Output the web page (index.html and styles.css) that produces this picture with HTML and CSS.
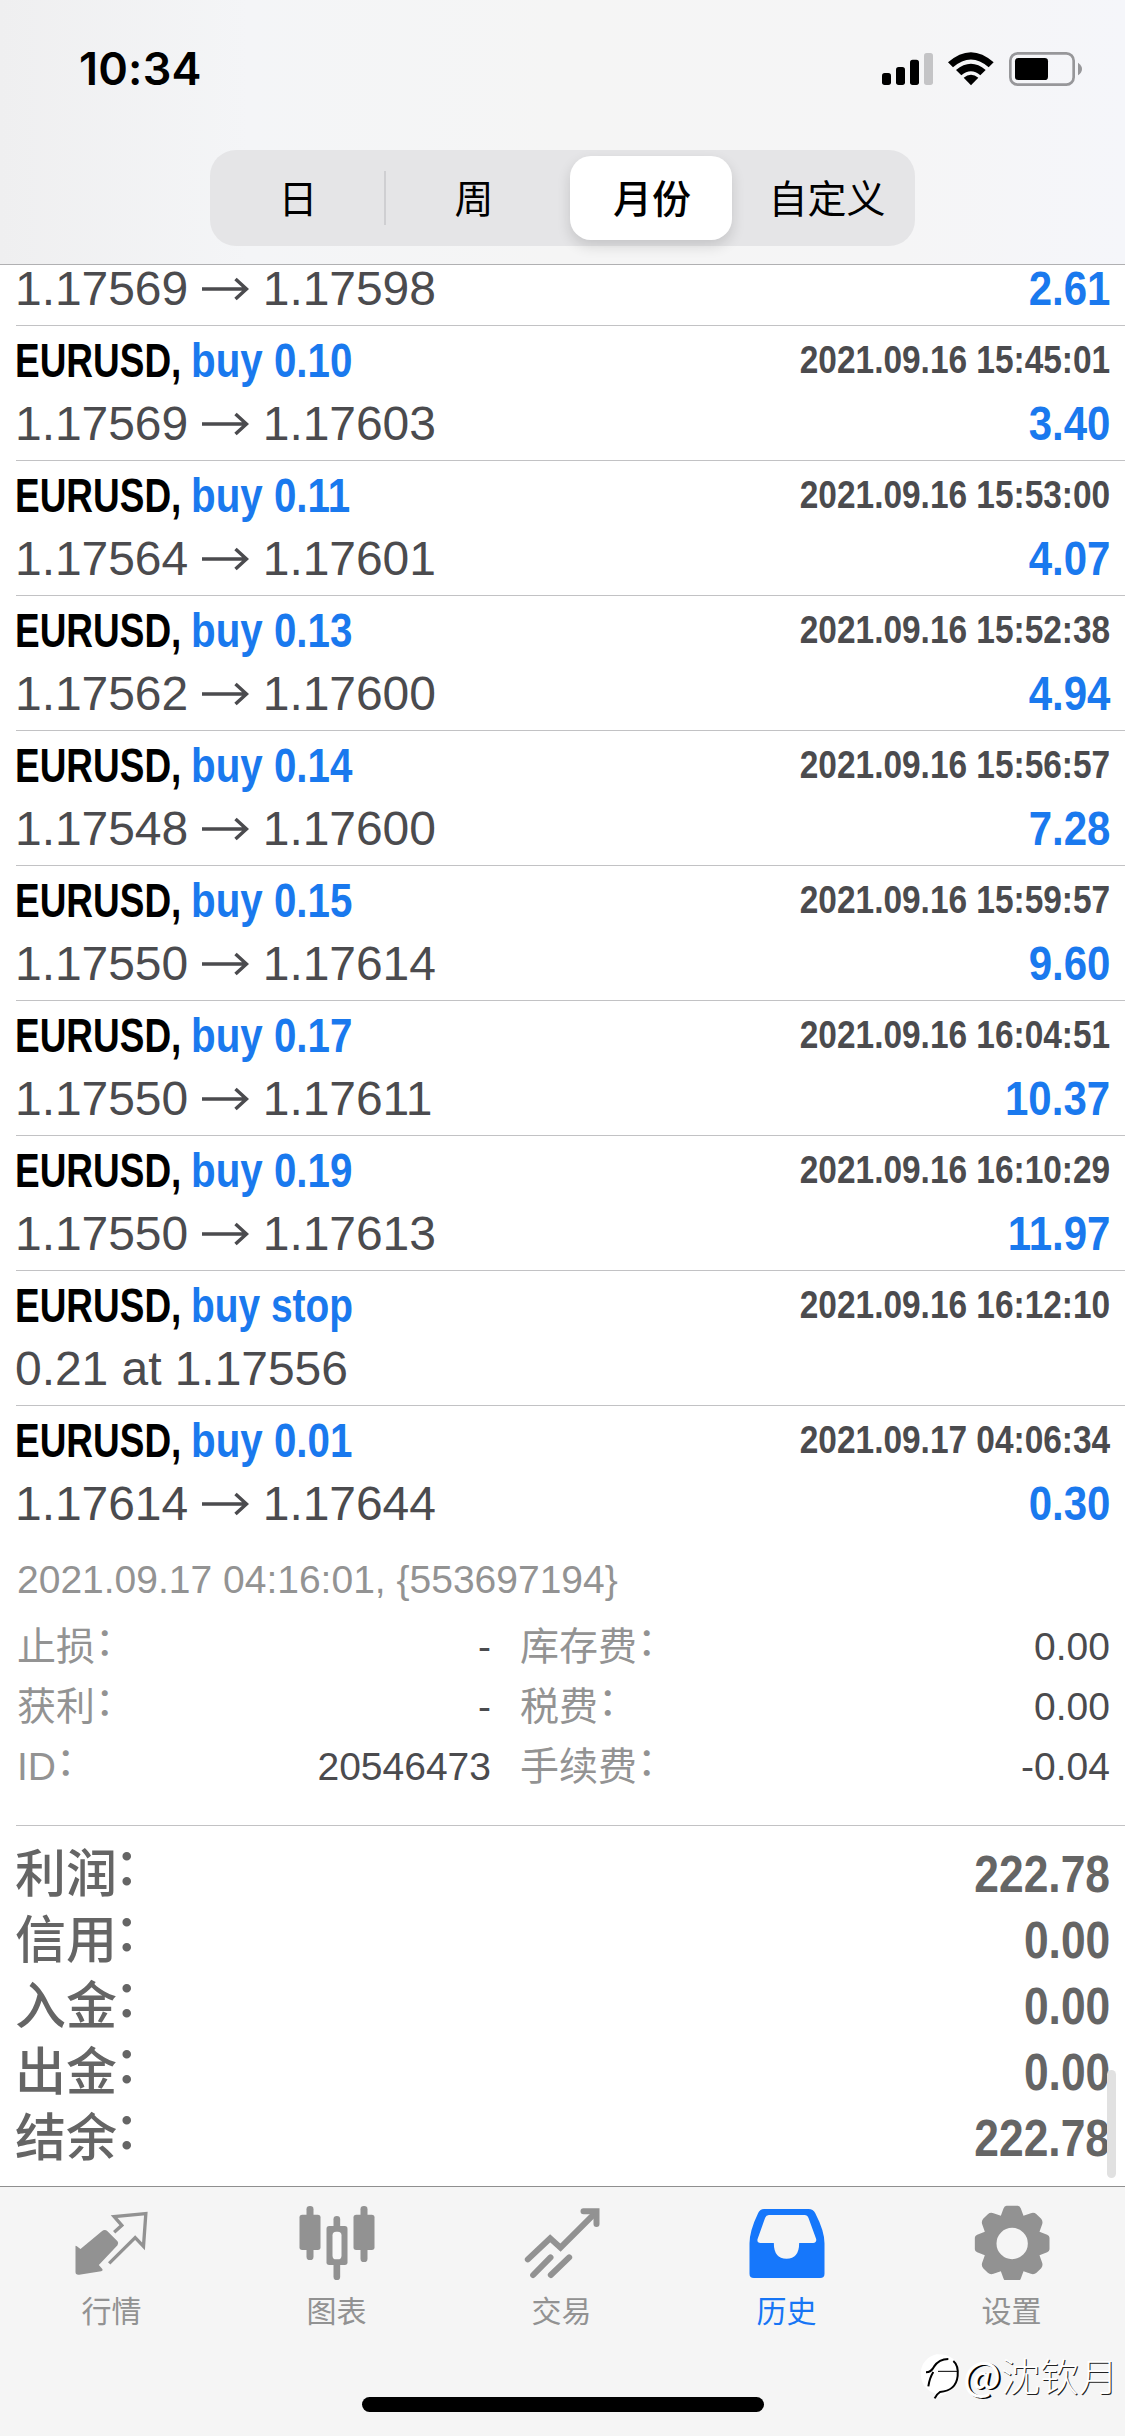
FILE: index.html
```html
<!DOCTYPE html>
<html lang="zh-CN">
<head>
<meta charset="utf-8">
<title>历史</title>
<link rel="stylesheet" href="styles.css">
</head>
<body>
<div class="screen">
  <header class="header">
    <div class="status">
      <span class="clock">10:34</span>
      <svg class="status-icons" viewBox="0 0 660 180">
        <rect x="36" y="99" width="27" height="36" rx="8"/>
        <rect x="78" y="81" width="27" height="54" rx="8"/>
        <rect x="120" y="59" width="27" height="76" rx="8"/>
        <rect x="162" y="39" width="27" height="96" rx="8" fill="#c4c4c6"/>
        <path d="M234 67Q303 6 371 67L356 82Q303 35 249 82Z"/>
        <path d="M258 90Q303 52 347 90L331 106Q303 82 274 106Z"/>
        <path d="M281 113Q303 95 325 113L303 136Z"/>
        <rect x="421" y="40" width="190" height="94" rx="22" fill="none" stroke="#97979a" stroke-width="8"/>
        <rect x="435" y="54" width="99" height="66" rx="10"/>
        <path d="M624 68Q636 76 636 87T624 106Z" fill="#97979a"/>
      </svg>
    </div>
    <nav class="segments">
      <span class="segment divided">日</span>
      <span class="segment">周</span>
      <span class="segment selected">月份</span>
      <span class="segment">自定义</span>
    </nav>
  </header>

  <main class="content">
    <section class="row row-cut">
      <div class="line"><span class="price">1.17569 <svg class="arrow" viewBox="0 0 48 24"><path d="M1 12H45M34.500 2L45.500 12L34.500 22"/></svg> 1.17598</span><b class="profit">2.61</b></div>
    </section>
    <section class="row">
      <div class="line"><span class="name"><b class="symbol">EURUSD,</b><b class="side">buy 0.10</b></span><b class="date">2021.09.16 15:45:01</b></div>
      <div class="line"><span class="price">1.17569 <svg class="arrow" viewBox="0 0 48 24"><path d="M1 12H45M34.500 2L45.500 12L34.500 22"/></svg> 1.17603</span><b class="profit">3.40</b></div>
    </section>
    <section class="row">
      <div class="line"><span class="name"><b class="symbol">EURUSD,</b><b class="side">buy 0.11</b></span><b class="date">2021.09.16 15:53:00</b></div>
      <div class="line"><span class="price">1.17564 <svg class="arrow" viewBox="0 0 48 24"><path d="M1 12H45M34.500 2L45.500 12L34.500 22"/></svg> 1.17601</span><b class="profit">4.07</b></div>
    </section>
    <section class="row">
      <div class="line"><span class="name"><b class="symbol">EURUSD,</b><b class="side">buy 0.13</b></span><b class="date">2021.09.16 15:52:38</b></div>
      <div class="line"><span class="price">1.17562 <svg class="arrow" viewBox="0 0 48 24"><path d="M1 12H45M34.500 2L45.500 12L34.500 22"/></svg> 1.17600</span><b class="profit">4.94</b></div>
    </section>
    <section class="row">
      <div class="line"><span class="name"><b class="symbol">EURUSD,</b><b class="side">buy 0.14</b></span><b class="date">2021.09.16 15:56:57</b></div>
      <div class="line"><span class="price">1.17548 <svg class="arrow" viewBox="0 0 48 24"><path d="M1 12H45M34.500 2L45.500 12L34.500 22"/></svg> 1.17600</span><b class="profit">7.28</b></div>
    </section>
    <section class="row">
      <div class="line"><span class="name"><b class="symbol">EURUSD,</b><b class="side">buy 0.15</b></span><b class="date">2021.09.16 15:59:57</b></div>
      <div class="line"><span class="price">1.17550 <svg class="arrow" viewBox="0 0 48 24"><path d="M1 12H45M34.500 2L45.500 12L34.500 22"/></svg> 1.17614</span><b class="profit">9.60</b></div>
    </section>
    <section class="row">
      <div class="line"><span class="name"><b class="symbol">EURUSD,</b><b class="side">buy 0.17</b></span><b class="date">2021.09.16 16:04:51</b></div>
      <div class="line"><span class="price">1.17550 <svg class="arrow" viewBox="0 0 48 24"><path d="M1 12H45M34.500 2L45.500 12L34.500 22"/></svg> 1.17611</span><b class="profit">10.37</b></div>
    </section>
    <section class="row">
      <div class="line"><span class="name"><b class="symbol">EURUSD,</b><b class="side">buy 0.19</b></span><b class="date">2021.09.16 16:10:29</b></div>
      <div class="line"><span class="price">1.17550 <svg class="arrow" viewBox="0 0 48 24"><path d="M1 12H45M34.500 2L45.500 12L34.500 22"/></svg> 1.17613</span><b class="profit">11.97</b></div>
    </section>
    <section class="row">
      <div class="line"><span class="name"><b class="symbol">EURUSD,</b><b class="side side-stop">buy stop</b></span><b class="date">2021.09.16 16:12:10</b></div>
      <div class="line"><span class="price">0.21 at 1.17556</span></div>
    </section>
    <section class="row row-open">
      <div class="line"><span class="name"><b class="symbol">EURUSD,</b><b class="side">buy 0.01</b></span><b class="date">2021.09.17 04:06:34</b></div>
      <div class="line"><span class="price">1.17614 <svg class="arrow" viewBox="0 0 48 24"><path d="M1 12H45M34.500 2L45.500 12L34.500 22"/></svg> 1.17644</span><b class="profit">0.30</b></div>
      <div class="details">
        <p class="closed">2021.09.17 04:16:01, {553697194}</p>
        <dl class="facts">
          <div class="fact"><dt>止损<span class="colon">：</span></dt><dd>-</dd></div>
          <div class="fact"><dt>库存费<span class="colon">：</span></dt><dd>0.00</dd></div>
          <div class="fact"><dt>获利<span class="colon">：</span></dt><dd>-</dd></div>
          <div class="fact"><dt>税费<span class="colon">：</span></dt><dd>0.00</dd></div>
          <div class="fact"><dt>ID<span class="colon">：</span></dt><dd>20546473</dd></div>
          <div class="fact"><dt>手续费<span class="colon">：</span></dt><dd>-0.04</dd></div>
        </dl>
      </div>
    </section>
    <section class="summary">
      <div class="total"><span>利润<span class="colon">：</span></span><b>222.78</b></div>
      <div class="total"><span>信用<span class="colon">：</span></span><b>0.00</b></div>
      <div class="total"><span>入金<span class="colon">：</span></span><b>0.00</b></div>
      <div class="total"><span>出金<span class="colon">：</span></span><b>0.00</b></div>
      <div class="total"><span>结余<span class="colon">：</span></span><b>222.78</b></div>
    </section>
    <i class="scrollbar"></i>
  </main>

  <footer class="tabbar">
    <div class="tab">
      <svg class="icon" viewBox="22.500 15 270 240">
        <path d="M45 154Q45 150 49 154L60 162L124 109Q133 101 141 109L171 139Q176 146 171 151L115 210L126 223Q128 228 122 229L56 239Q45 240 45 231Z"/>
        <path d="M161 112L184 91L161 65L256 56L249 154L224 128L146 205" fill="none" stroke="#929292" stroke-width="10"/>
      </svg>
      <span>行情</span>
    </div>
    <div class="tab">
      <svg class="icon" viewBox="697.500 15 270 240">
        <rect x="717" y="59" width="63" height="106" rx="8"/>
        <rect x="738" y="33" width="21" height="162" rx="10"/>
        <rect x="879" y="59" width="63" height="106" rx="8"/>
        <rect x="900" y="33" width="21" height="168" rx="10"/>
        <rect x="819" y="63" width="20" height="50" rx="10"/>
        <rect x="819" y="195" width="20" height="60" rx="10"/>
        <rect x="798" y="93" width="63" height="117" rx="8"/>
        <rect x="816" y="110" width="27" height="83" rx="11" fill="#f8f8f8"/>
      </svg>
      <span>图表</span>
    </div>
    <div class="tab">
      <svg class="icon" viewBox="52.500 15 270 240">
        <g fill="none" stroke="#929292" stroke-width="18" stroke-linecap="round">
          <path d="M82 193L149 130L180 158L286 52"/>
          <path d="M249 49H288V87"/>
          <path d="M98 240L150 187M151 240L206 187"/>
        </g>
      </svg>
      <span>交易</span>
    </div>
    <div class="tab active">
      <svg class="icon" viewBox="727.500 15 270 240">
        <path fill-rule="evenodd" d="M791 42H924Q938 42 944 54Q972 108 972 145V236Q972 249 959 249H760Q747 249 747 236V145Q747 108 773 54Q779 42 791 42ZM805 60Q797 60 794 68L771 133Q769 144 780 144H820Q820 191 858 191T896 144H938Q949 143 947 132L924 69Q921 60 912 60Z"/>
      </svg>
      <span>历史</span>
    </div>
    <div class="tab">
      <svg class="icon" viewBox="187.500 15 270 240">
        <g transform="translate(320 145.500)">
          <path fill-rule="evenodd" d="M-17 -113H17Q23 -113 26 -105L34 -83L56 -91Q66 -94 73 -88L87 -74Q93 -67 90 -58L82 -35L105 -26Q112 -23 112 -17V17Q112 23 105 26L82 35L90 58Q93 67 87 74L73 88Q66 94 56 91L34 83L26 105Q23 113 17 113H-17Q-23 113 -26 105L-34 83L-56 91Q-66 94 -73 88L-87 74Q-93 67 -90 58L-82 35L-105 26Q-112 23 -112 17V-17Q-112 -23 -105 -26L-82 -35L-90 -58Q-93 -67 -87 -74L-73 -88Q-66 -94 -56 -91L-34 -83L-26 -105Q-23 -113 -17 -113ZM0 -47A47 47 0 1 0 0 47A47 47 0 1 0 0 -47Z"/>
        </g>
      </svg>
      <span>设置</span>
    </div>
    <i class="home"></i>
    <div class="credit">
      <svg class="credit-logo" viewBox="45 468 135 150">
        <path d="M100 475Q165 474 168 528Q166 584 98 607L96 592Q55 578 53 533Q55 488 100 475Z" fill="#fff"/>
        <path d="M69 529Q84 529 93 512Q108 489 136 489M91 528Q80 545 76 571M151 495Q167 508 164 540Q159 584 111 588Q99 596 95 607" fill="none" stroke="#000" stroke-width="6"/>
        <path d="M105 526H165" stroke="#000" stroke-width="3"/>
      </svg>
      <span><span class="at">@</span>沈钦月</span>
    </div>
  </footer>
</div>
</body>
</html>
```
FILE: styles.css
```css
* { box-sizing: border-box; margin: 0; padding: 0; }
body {
  background: #fff;
  font-family: "Liberation Sans", "Noto Sans CJK SC", sans-serif;
}
.screen {
  width: 1125px;
  height: 2436px;
  display: flex;
  flex-direction: column;
  overflow: hidden;
}

/* Header */
.header {
  height: 265px;
  border-bottom: 1px solid #b0b0b2;
  background: linear-gradient(90deg, #efeff0, #f4f5f7 22%, #f5f5f5 50%, #f5f5f6 80%, #f5f6fa);
}
.status {
  height: 150px;
  padding: 40px 35px 0 79px;
  display: flex;
  justify-content: space-between;
}
.clock {
  font: 600 45px/58px Inter, sans-serif;
  letter-spacing: 0.2px;
}
.status-icons { width: 220px; height: 60px; }
.segments {
  width: 705px;
  height: 96px;
  margin-left: 210px;
  padding: 6px 0;
  display: grid;
  grid-template-columns: 176px 176px 177px 176px;
  align-items: center;
  border-radius: 26px;
  background: #e5e5e7;
}
.segment {
  height: 84px;
  font: 400 39px/80px "Noto Sans CJK SC", sans-serif;
  text-align: center;
}
.divided {
  background: linear-gradient(#cfcfd2, #cfcfd2) right center / 2px 54px no-repeat;
}
.selected {
  margin: 0 7px 0 8px;
  padding-left: 2px;
  border-radius: 21px;
  background: #fff;
  font-weight: 500;
  box-shadow: 0 6px 14px rgba(0, 0, 0, 0.14);
}

/* Deals */
.content {
  position: relative;
  height: 1921px;
}
.row {
  height: 135px;
  margin-left: 16px;
  padding: 3px 15px 0 0;
  border-bottom: 1px solid #c2c2c4;
  color: #4b4b4e;
}
.row-cut {
  height: 61px;
  padding-top: 0;
}
.row-cut .line { height: 47px; line-height: 47px; }
.line {
  height: 63px;
  margin-left: -1px;
  display: flex;
  justify-content: space-between;
  font-size: 48px;
  line-height: 63px;
  white-space: nowrap;
}
.name { display: flex; }
.symbol, .side { transform-origin: left; }
.symbol { width: 176px; color: #000; transform: scaleX(0.77); }
.side { color: #1a79ee; transform: scaleX(0.84); }
.side-stop { transform: scaleX(0.81); }
.date, .profit, .total b { transform-origin: right; }
.date { font-size: 39px; line-height: 61px; transform: scaleX(0.857); }
.profit { color: #1a79ee; transform: scaleX(0.875); }
.price { letter-spacing: -0.05px; }
.arrow {
  width: 48px;
  height: 24px;
  vertical-align: 4px;
  fill: none;
  stroke: #4b4b4e;
  stroke-width: 3.5;
}

/* Expanded deal */
.row-open { height: 420px; }
.details {
  padding: 15px 0 0 1px;
  font-size: 39px;
  line-height: 60px;
  color: #939393;
}
.closed { height: 67px; }
.facts {
  display: grid;
  grid-template-columns: 474px 590px;
  column-gap: 29px;
}
.fact {
  height: 60px;
  display: flex;
  justify-content: space-between;
}
.fact dd { color: #4b4b4e; }
.colon { display: inline-block; }
.fact .colon { transform: translateY(-5px); }

/* Totals */
.summary {
  padding: 16px 15px 0 15px;
  color: #656565;
}
.total {
  height: 66px;
  display: flex;
  justify-content: space-between;
  font-size: 51px;
  line-height: 66px;
}
.total span { font-weight: 500; }
.total .colon { transform: translate(-3px, -7px); }
.total b { transform: scaleX(0.87); }
.scrollbar {
  position: absolute;
  right: 9px;
  bottom: 8px;
  width: 9px;
  height: 108px;
  border-radius: 5px;
  background: #e1e1e1;
}

/* Tab bar */
.tabbar {
  position: relative;
  height: 250px;
  padding-top: 13px;
  display: grid;
  grid-template-columns: repeat(5, 225px);
  align-content: start;
  border-top: 1px solid #8f8f8f;
  background: #f5f5f5;
}
.tab {
  display: flex;
  flex-direction: column;
  align-items: center;
  color: #929292;
  fill: #929292;
}
.tab.active { color: #1775f5; fill: #1677fb; }
.icon { width: 90px; height: 80px; }
.tab span {
  margin: 7px 2px 0 0;
  font: 400 30px/44px "Noto Sans CJK SC", sans-serif;
}
.home {
  position: absolute;
  left: 362px;
  top: 210px;
  width: 402px;
  height: 15px;
  border-radius: 8px;
  background: #000;
}
.credit {
  position: absolute;
  right: 7px;
  top: 159px;
  display: flex;
  align-items: center;
  color: #fff;
  font: 300 39px/48px "Noto Sans CJK SC", sans-serif;
  text-shadow: 1px 1px 0 #222;
}
.at { font-weight: 500; text-shadow: 2px 1px 0 #000; }
.credit-logo { width: 45px; height: 50px; margin-top: 6px; }
```
